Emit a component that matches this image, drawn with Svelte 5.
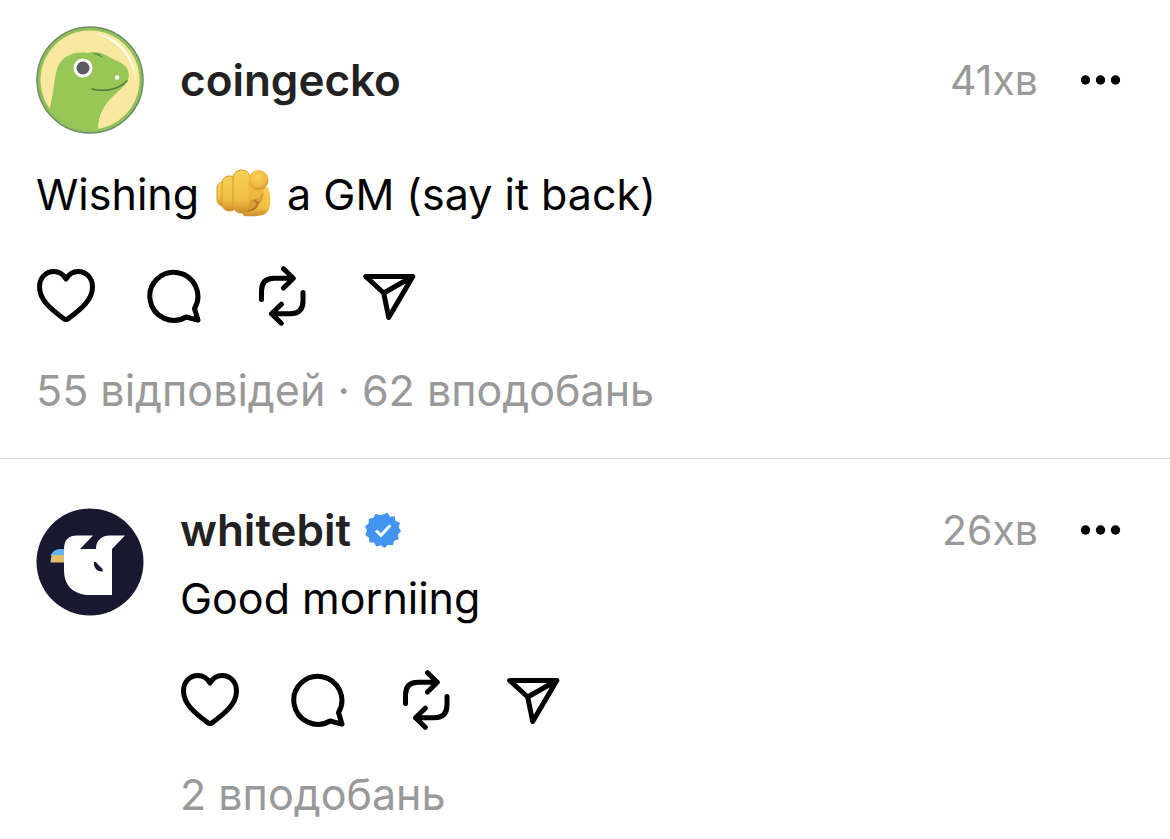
<script lang="ts">
  type Post = {
    author: string;
    verified: boolean;
    age: string;
    text: string[];
    replies?: string;
    likes: string;
  };

  const thread: Post = {
    author: "coingecko",
    verified: false,
    age: "41хв",
    text: ["Wishing", "a GM (say it back)"],
    replies: "55 відповідей",
    likes: "62 вподобань",
  };

  const reply: Post = {
    author: "whitebit",
    verified: true,
    age: "26хв",
    text: ["Good morniing"],
    likes: "2 вподобань",
  };
</script>

{#snippet meta(post: Post)}
  <div class="meta">
    <a class="meta__author" href="#{post.author}">{post.author}</a>
    {#if post.verified}
      <svg class="meta__badge" viewBox="0 0 36 36" role="img" aria-label="Verified">
        <path
          fill="#4194ef"
          d="M18 2.5L22.400 .8 25 4.700 29.700 4.300 30.500 9 35 10.800 33.600 15.300 36 19 33 22.500 33.600 27.200 29.200 28.800 27.700 33.300 23 32.700 19.500 36 16 33.200 11.400 34.500 9 30.500 4.300 30.500 4 25.800 .3 23 2 18.600 0 14.400 3.600 11.500 3.800 6.700 8.400 6 10.600 1.700 15 3.300z"
        />
        <path fill="none" stroke="#fff" stroke-width="3" d="M11 18.500l5 4.800 9.300-10" />
      </svg>
    {/if}
    <time class="meta__age">{post.age}</time>
    <button class="meta__more" type="button" aria-label="More">
      <svg viewBox="0 0 42 12">
        <circle cx="5.500" cy="6" r="4.700" />
        <circle cx="20.500" cy="6" r="4.700" />
        <circle cx="35.500" cy="6" r="4.700" />
      </svg>
    </button>
  </div>
{/snippet}

{#snippet actions()}
  <div class="actions">
    <button class="actions__button" type="button" aria-label="Like">
      <svg viewBox="0 0 60 60">
        <path
          d="M30 13C27 8 22.500 5.500 18 5.500 9.500 5.500 3.500 12 3.500 21 3.500 34 15 43 27.500 52.500Q30 54.500 32.500 52.500C45 43 56.500 34 56.500 21 56.500 12 50.500 5.500 42 5.500 37.500 5.500 33 8 30 13Z"
        />
      </svg>
    </button>
    <button class="actions__button" type="button" aria-label="Reply">
      <svg viewBox="0 0 60 60">
        <path d="M50.500 42.500L54 54.200 42 51A24 24 0 1 1 50.500 42.500Z" />
      </svg>
    </button>
    <button class="actions__button" type="button" aria-label="Repost">
      <svg viewBox="0 0 60 60">
        <path
          d="M9.500 33.500V25Q9.500 12.300 22 12.300H41M31.500 2.700L41.300 12.300 31.500 22M51 26.500V35Q51 47.700 38.500 47.700H19.500M29.300 38.200L19.500 47.700 29.300 57.200"
        />
      </svg>
    </button>
    <button class="actions__button" type="button" aria-label="Share">
      <svg viewBox="0 0 60 60">
        <path d="M5.700 10.500H52.800L28.700 51.500 23.700 27ZM23.700 27L52.800 10.500" />
      </svg>
    </button>
  </div>
{/snippet}

<main class="feed">
  <article class="post">
    <header class="post__header">
      <svg class="avatar" viewBox="0 0 108 108" role="img" aria-label="coingecko">
        <defs>
          <clipPath id="gecko-clip"><circle cx="54" cy="54" r="50" /></clipPath>
        </defs>
        <circle cx="54" cy="54" r="53" fill="#91c05a" stroke="#6f8a66" stroke-width="1.500" />
        <circle cx="54" cy="54" r="49.500" fill="#f8e8a0" />
        <path
          clip-path="url(#gecko-clip)"
          fill="#98c657"
          d="M13 85C18 66 18 53 21 43 25 31 36 25 52 27 62 24 68 28 77 33 89 38 94 42 92.500 52 90 65 62 72 62 104L54 108H10Z"
        />
        <path
          fill="#fffef5"
          d="M58 7.500C84 10 100 31 100 58 98 35 84 14 58 7.500Z"
        />
        <path fill="#4f9446" d="M56 28C61 26 65 28 67 32 64 31 61 28 56 28Z" />
        <circle cx="47" cy="42" r="9.500" fill="#fff" />
        <circle cx="47" cy="42" r="6.500" fill="#575b60" />
        <circle cx="81" cy="51.500" r="2.300" fill="#fff" />
        <path
          fill="none"
          stroke="#557b35"
          stroke-width="1.500"
          stroke-linecap="round"
          d="M56 63C68 66 82 64 91 55"
        />
      </svg>
      {@render meta(thread)}
    </header>
    <p class="post__text">
      <span>{thread.text[0]}</span>
      <svg class="post__emoji" viewBox="0 0 58 50" role="img" aria-label="you">
        <defs>
          <linearGradient id="skin" x2="0" y2="1">
            <stop offset="0" stop-color="#f8d155" />
            <stop offset="0.700" stop-color="#efbd40" />
            <stop offset="1" stop-color="#cf8c30" />
          </linearGradient>
          <radialGradient id="tip" cx="0.450" cy="0.350" r="0.650">
            <stop offset="0" stop-color="#f9d45b" />
            <stop offset="0.700" stop-color="#f0ba40" />
            <stop offset="1" stop-color="#d6952f" />
          </radialGradient>
        </defs>
        <path
          fill="url(#skin)"
          d="M34 18L53 18C56 25 56 34 54 40 52 46 45 48 29 47 26 44 28 41 31 40Z"
        />
        <path fill="#dba139" d="M34 20L48 22C50 31 44 39 31 42Z" />
        <path fill="none" stroke="#b9752b" stroke-width="2" d="M30 42C38 42 42 39 43 33M43 34L39 31" />
        <rect x="2" y="13" width="12" height="24" rx="6" fill="url(#skin)" stroke="#d29a33" />
        <rect x="7" y="7" width="15" height="35" rx="7" fill="url(#skin)" stroke="#d29a33" />
        <rect x="18" y="1" width="17" height="43" rx="8" fill="url(#skin)" stroke="#d29a33" />
        <path fill="#edb942" d="M32 14L51 18 44 29 35 31Z" />
        <circle cx="43.500" cy="11" r="10" fill="url(#tip)" />
      </svg>
      <span>{thread.text[1]}</span>
    </p>
    {@render actions()}
    <p class="post__stats">{thread.replies} · {thread.likes}</p>
  </article>

  <article class="post post--reply">
    <svg class="avatar" viewBox="0 0 108 108" role="img" aria-label="whitebit">
      <circle cx="54" cy="54" r="53.500" fill="#181830" />
      <path fill="#60b4f3" d="M14.500 48C17 42 21 40.500 29 41V48H14Z" />
      <path fill="#dfbd6c" d="M16 47H29V54.500H14.500Q14.500 50 16 47Z" />
      <path
        fill="#fff"
        d="M28 42C28 31 33 27.500 41 27.500H57L44 41H60C60 32 66 27.500 74 27.500H89L76 41V87H50C36 85 28 77 28 62Z"
      />
      <path fill="#181830" d="M58 54C57 59 61 64 66.500 63.500 68 60 63 59 60 54Z" />
    </svg>
    <div class="post__body">
      {@render meta(reply)}
      <p class="post__text">{reply.text[0]}</p>
      {@render actions()}
      <p class="post__stats">{reply.likes}</p>
    </div>
  </article>
</main>

<style>
  :global(body) {
    margin: 0;
    background: #fff;
  }

  .feed {
    font-family: Inter, "Noto Sans", sans-serif;
    font-size: 43px;
    line-height: 52px;
    color: #000;
  }

  .post {
    padding: 26px 48px 42px 36px;
    border-bottom: 1px solid #d9d9d9;
  }

  .post__header {
    display: flex;
    align-items: center;
    gap: 36px;
  }

  .avatar {
    display: block;
    flex: none;
    width: 108px;
    height: 108px;
  }

  .meta {
    flex: 1;
    min-width: 0;
    display: flex;
    align-items: center;
  }

  .meta__author {
    color: #222;
    font-size: 44px;
    font-weight: 600;
    text-decoration: none;
  }

  .meta__badge {
    width: 36px;
    height: 36px;
    margin-left: 14px;
  }

  .meta__age {
    margin-left: auto;
    color: #999;
    font-size: 41px;
  }

  .meta__more,
  .actions__button {
    padding: 0;
    border: 0;
    background: none;
    cursor: pointer;
  }

  .meta__more {
    margin-left: 42px;
    width: 42px;
    height: 36px;
  }

  .meta__more svg {
    display: block;
    width: 42px;
    height: 12px;
  }

  .post__text {
    margin: 34px 0 0;
    display: flex;
    align-items: center;
  }

  .post__emoji {
    width: 58px;
    height: 50px;
    margin: 0 14px 0 16px;
  }

  .actions {
    display: flex;
    gap: 48px;
    margin-top: 46px;
  }

  .actions__button {
    width: 60px;
    height: 60px;
  }

  .actions__button svg {
    display: block;
    fill: none;
    stroke: #000;
    stroke-width: 5;
    stroke-linecap: round;
    stroke-linejoin: round;
  }

  .post__stats {
    margin: 38px 0 0;
    color: #999;
  }

  .post--reply {
    display: flex;
    gap: 36px;
    padding-top: 49px;
    padding-bottom: 16px;
    border-bottom: 0;
  }

  .post__body {
    flex: 1;
    min-width: 0;
    margin-top: -4px;
  }

  .post--reply .post__text {
    margin-top: 16px;
  }
</style>
